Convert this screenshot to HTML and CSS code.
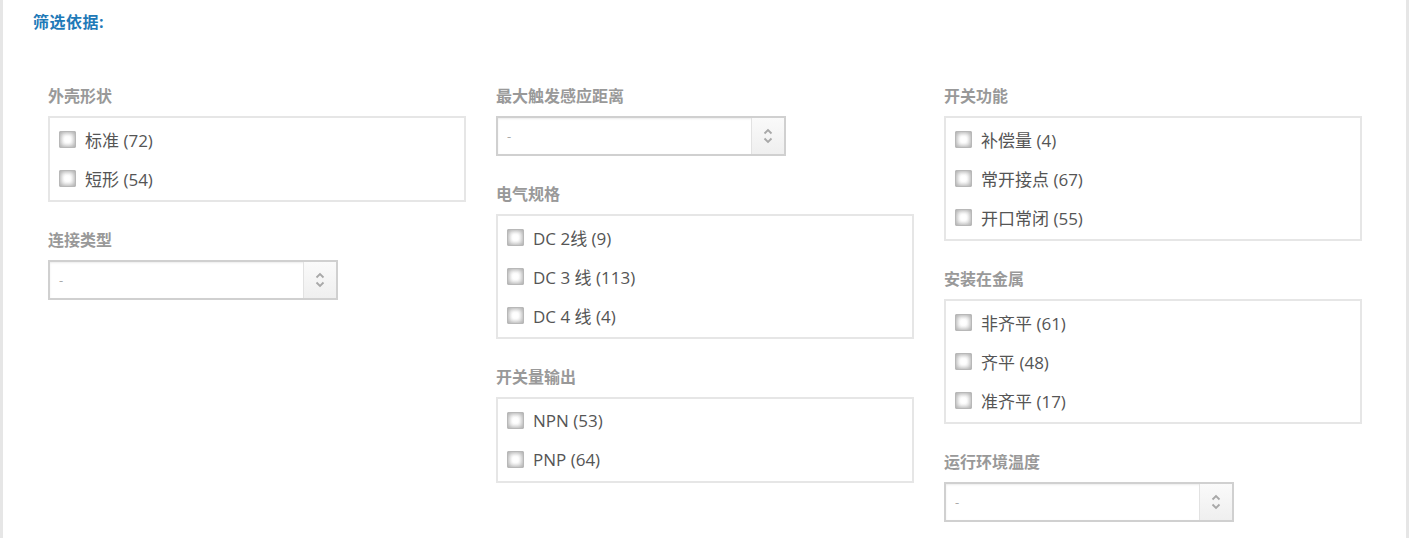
FILE: index.html
```html
<!DOCTYPE html>
<html lang="zh-CN">
<head>
<meta charset="utf-8">
<title>筛选依据</title>
<link rel="stylesheet" href="styles.css">
</head>
<body>
<div class="frame">
  <div class="title">筛选依据:</div>
  <div class="columns">
    <div class="col">
      <div class="group">
        <div class="label">外壳形状</div>
        <div class="box">
          <label class="item"><span class="cb"></span><span>标准 (72)</span></label>
          <label class="item"><span class="cb"></span><span>短形 (54)</span></label>
        </div>
      </div>
      <div class="group">
        <div class="label">连接类型</div>
        <div class="select"><span class="val">-</span><span class="arrow"><svg width="10" height="18" viewBox="0 0 10 18"><path d="M1.5 6.5 L5 3 L8.5 6.5" fill="none" stroke="#a8a8a8" stroke-width="1.8"/><path d="M1.5 11.5 L5 15 L8.5 11.5" fill="none" stroke="#a8a8a8" stroke-width="1.8"/></svg></span></div>
      </div>
    </div>
    <div class="col">
      <div class="group">
        <div class="label">最大触发感应距离</div>
        <div class="select"><span class="val">-</span><span class="arrow"><svg width="10" height="18" viewBox="0 0 10 18"><path d="M1.5 6.5 L5 3 L8.5 6.5" fill="none" stroke="#a8a8a8" stroke-width="1.8"/><path d="M1.5 11.5 L5 15 L8.5 11.5" fill="none" stroke="#a8a8a8" stroke-width="1.8"/></svg></span></div>
      </div>
      <div class="group">
        <div class="label">电气规格</div>
        <div class="box">
          <label class="item"><span class="cb"></span><span>DC 2线 (9)</span></label>
          <label class="item"><span class="cb"></span><span>DC 3 线 (113)</span></label>
          <label class="item"><span class="cb"></span><span>DC 4 线 (4)</span></label>
        </div>
      </div>
      <div class="group">
        <div class="label">开关量输出</div>
        <div class="box">
          <label class="item"><span class="cb"></span><span>NPN (53)</span></label>
          <label class="item"><span class="cb"></span><span>PNP (64)</span></label>
        </div>
      </div>
    </div>
    <div class="col">
      <div class="group">
        <div class="label">开关功能</div>
        <div class="box">
          <label class="item"><span class="cb"></span><span>补偿量 (4)</span></label>
          <label class="item"><span class="cb"></span><span>常开接点 (67)</span></label>
          <label class="item"><span class="cb"></span><span>开口常闭 (55)</span></label>
        </div>
      </div>
      <div class="group">
        <div class="label">安装在金属</div>
        <div class="box">
          <label class="item"><span class="cb"></span><span>非齐平 (61)</span></label>
          <label class="item"><span class="cb"></span><span>齐平 (48)</span></label>
          <label class="item"><span class="cb"></span><span>准齐平 (17)</span></label>
        </div>
      </div>
      <div class="group">
        <div class="label">运行环境温度</div>
        <div class="select"><span class="val">-</span><span class="arrow"><svg width="10" height="18" viewBox="0 0 10 18"><path d="M1.5 6.5 L5 3 L8.5 6.5" fill="none" stroke="#a8a8a8" stroke-width="1.8"/><path d="M1.5 11.5 L5 15 L8.5 11.5" fill="none" stroke="#a8a8a8" stroke-width="1.8"/></svg></span></div>
      </div>
    </div>
  </div>
</div>
</body>
</html>
```

FILE: styles.css
```css
* { box-sizing: border-box; }
html, body { margin: 0; padding: 0; background: #fff; }
body {
  font-family: "Open Sans", "Noto Sans CJK SC", sans-serif;
  color: #555;
}
.frame {
  border-left: 3px solid #e6e6e6;
  border-right: 3px solid #e6e6e6;
  min-height: 538px;
  padding: 12px 0 0 0;
}
.title {
  padding-left: 30px;
  font-size: 16px;
  line-height: 20px;
  font-weight: bold;
  color: #1f7ab8;
  letter-spacing: 0.5px;
}
.columns {
  display: flex;
  gap: 30px;
  padding-left: 45px;
  margin-top: 54px;
}
.col {
  width: 418px;
  display: flex;
  flex-direction: column;
}
.group { margin-bottom: 28px; }
.label {
  font-size: 16px;
  line-height: 20px;
  font-weight: bold;
  color: #999;
  margin-bottom: 10px;
}
.box {
  border: 2px solid #e6e6e6;
  padding: 2px 0 2px;
}
.item {
  display: flex;
  align-items: center;
  height: 39px;
  padding-left: 9px;
  gap: 9px;
  font-size: 17px;
  color: #555;
}
.cb {
  width: 17px;
  height: 17px;
  border: 1px solid #b8b8b8;
  border-radius: 1px;
  background: radial-gradient(circle, #fff 30%, #e4e4e4 100%);
  box-shadow: inset 0 0 4px 1px rgba(0,0,0,0.25);
  flex: none;
}
.select {
  width: 290px;
  height: 40px;
  border: 2px solid #d0d0d0;
  box-shadow: inset 0 1px 2px rgba(0,0,0,0.08);
  display: flex;
  align-items: stretch;
  background: #fff;
}
.val {
  flex: 1;
  display: flex;
  align-items: center;
  padding-left: 9px;
  color: #aaa;
  font-size: 13px;
}
.arrow {
  width: 33px;
  border-left: 1px solid #e2e2e2;
  background: linear-gradient(#fafafa, #efefef);
  display: flex;
  align-items: center;
  justify-content: center;
}
```
